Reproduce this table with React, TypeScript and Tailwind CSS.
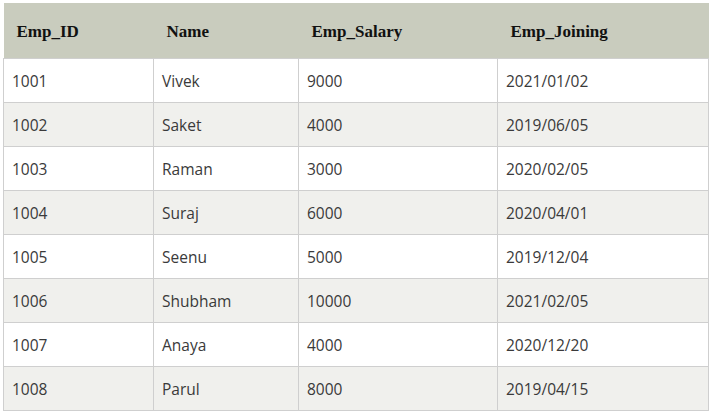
const rows = [
  ["1001", "Vivek", "9000", "2021/01/02"],
  ["1002", "Saket", "4000", "2019/06/05"],
  ["1003", "Raman", "3000", "2020/02/05"],
  ["1004", "Suraj", "6000", "2020/04/01"],
  ["1005", "Seenu", "5000", "2019/12/04"],
  ["1006", "Shubham", "10000", "2021/02/05"],
  ["1007", "Anaya", "4000", "2020/12/20"],
  ["1008", "Parul", "8000", "2019/04/15"],
]

const headers = ["Emp_ID", "Name", "Emp_Salary", "Emp_Joining"]
const widths = ["w-[150px]", "w-[145px]", "w-[199px]", "w-[211px]"]

export default function App() {
  return (
    <div className="w-[713px] h-[416px] bg-white pt-[3px] pl-[3px]">
      <table className="w-[706px] table-fixed border-collapse font-['Open_Sans',sans-serif] text-[15.5px] text-[#3a3a3a]">
        <thead>
          <tr className="h-[55px] bg-[#c9ccbe]">
            {headers.map((h, i) => (
              <th
                key={h}
                className={`${widths[i]} pl-[13px] pt-[2px] text-left align-middle font-['Liberation_Serif',serif] text-[17px] font-bold text-[#111]`}
              >
                {h}
              </th>
            ))}
          </tr>
        </thead>
        <tbody>
          {rows.map((r, i) => (
            <tr
              key={r[0]}
              className={`h-[44px] ${i % 2 === 1 ? "bg-[#f0f0ed]" : "bg-white"}`}
            >
              {r.map((c, j) => (
                <td key={j} className="border border-[#cfcfcf] pl-[8px] pt-[3px] align-middle">
                  {c}
                </td>
              ))}
            </tr>
          ))}
        </tbody>
      </table>
    </div>
  )
}
